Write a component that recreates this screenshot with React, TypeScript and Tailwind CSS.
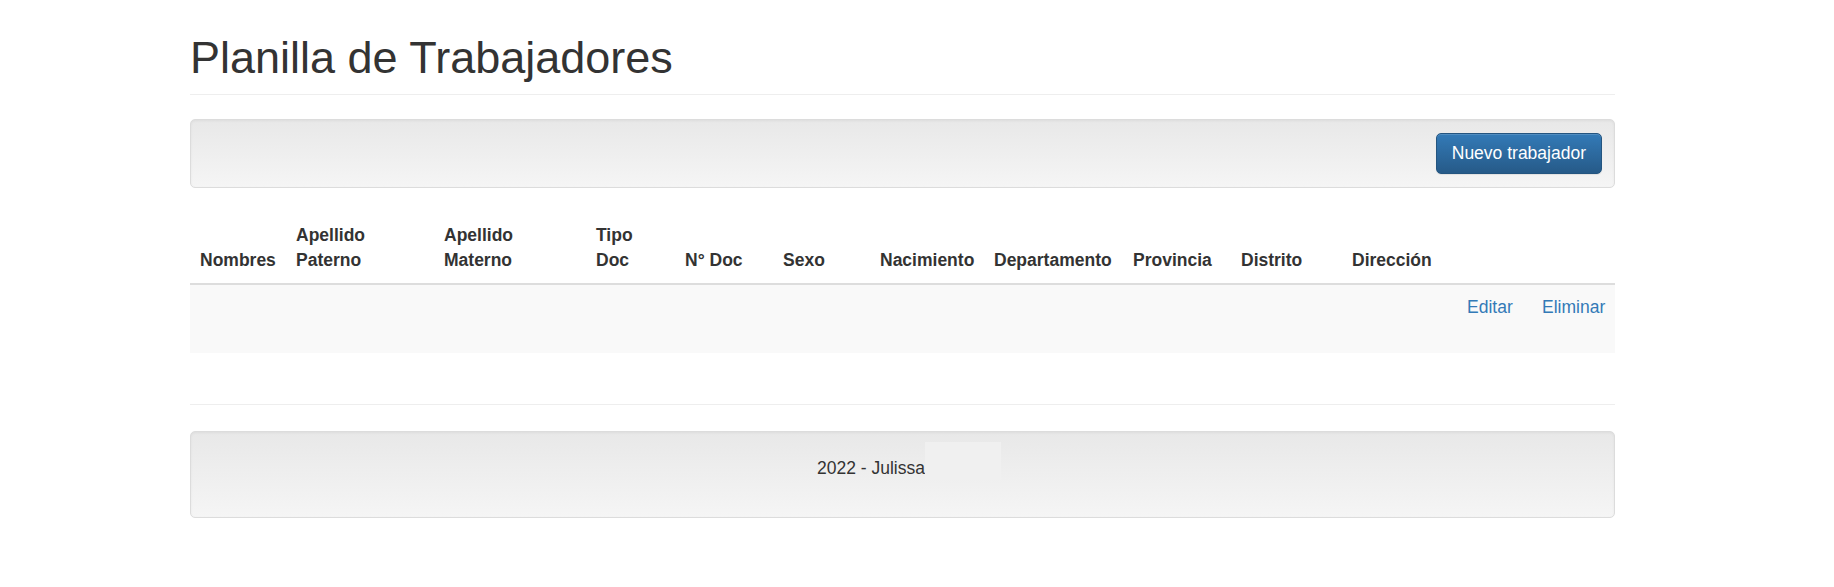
import React from "react";

const wellCls =
  "border border-[#dcdcdc] rounded-[5px] bg-[linear-gradient(to_bottom,#e8e8e8,#f5f5f5)] shadow-[inset_0_1px_3px_rgba(0,0,0,0.05),0_1px_0_rgba(255,255,255,0.1)]";

const cols: { w: string; label: React.ReactNode }[] = [
  { w: "w-[96px]", label: "Nombres" },
  { w: "w-[148px]", label: (<>Apellido<br />Paterno</>) },
  { w: "w-[152px]", label: (<>Apellido<br />Materno</>) },
  { w: "w-[89px]", label: (<>Tipo<br />Doc</>) },
  { w: "w-[98px]", label: "N° Doc" },
  { w: "w-[97px]", label: "Sexo" },
  { w: "w-[114px]", label: "Nacimiento" },
  { w: "w-[139px]", label: "Departamento" },
  { w: "w-[108px]", label: "Provincia" },
  { w: "w-[111px]", label: "Distrito" },
  { w: "w-[115px]", label: "Dirección" },
  { w: "w-[75px]", label: "" },
  { w: "w-[83px]", label: "" },
];

export default function App() {
  return (
    <div className="min-h-[587px] bg-white font-['Liberation_Sans',Arial,sans-serif] text-[17.5px] leading-[25px] text-[#333]">
      <div className="ml-[190px] w-[1425px]">
        <div className="pt-[33px] pb-[11px] border-b border-[#eee]">
          <h1 className="text-[45px] leading-[50px] font-normal text-[#333]">
            Planilla de Trabajadores
          </h1>
        </div>

        <div className={`mt-[24px] flex justify-end px-[12px] py-[13px] ${wellCls}`}>
          <button className="h-[41px] px-[15px] rounded-[5px] border border-[#245580] bg-[linear-gradient(to_bottom,#337ab7,#265a88)] text-white text-[17.5px] leading-[25px] shadow-[inset_0_1px_0_rgba(255,255,255,0.15),0_1px_1px_rgba(0,0,0,0.075)]">
            Nuevo trabajador
          </button>
        </div>

        <table className="mt-[25px] w-full table-fixed border-separate border-spacing-0">
          <colgroup>
            {cols.map((c, i) => (
              <col key={i} className={c.w} />
            ))}
          </colgroup>
          <thead>
            <tr>
              {cols.map((c, i) => (
                <th
                  key={i}
                  className="px-[10px] py-[10px] text-left align-bottom font-bold border-b-2 border-[#ddd] whitespace-nowrap"
                >
                  {c.label}
                </th>
              ))}
            </tr>
          </thead>
          <tbody>
            <tr className="h-[68px] bg-[#f9f9f9]">
              {cols.map((_, i) => (
                <td key={i} className="px-[10px] pt-[10px] align-top">
                  {i === 11 ? (
                    <a href="#" className="text-[#337ab7]">Editar</a>
                  ) : i === 12 ? (
                    <a href="#" className="text-[#337ab7]">Eliminar</a>
                  ) : null}
                </td>
              ))}
            </tr>
          </tbody>
        </table>

        <div className="mt-[51px] border-t border-[#eee]" />

        <div className={`mt-[26px] px-[24px] pt-[24px] pb-[36px] ${wellCls}`}>
          <p className="text-center pl-[13px]">
            <span className="relative pr-[76px]">
              2022 - Julissa
              <span className="absolute right-0 top-[-16px] w-[76px] h-[38px] bg-[#f0f0f0]" />
            </span>
          </p>
        </div>
      </div>
    </div>
  );
}
